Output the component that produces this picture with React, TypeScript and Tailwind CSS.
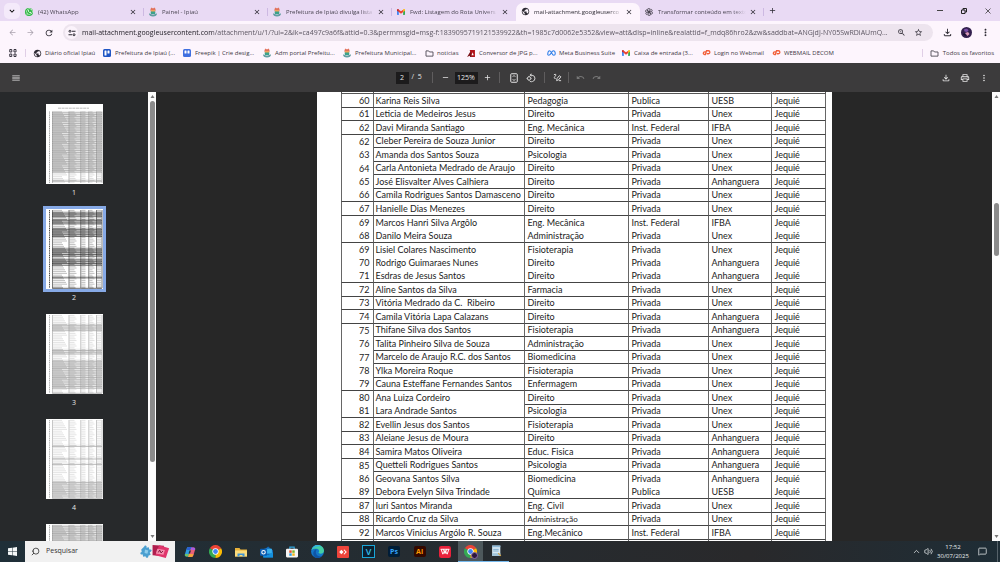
import type { ReactNode } from "react";
import { FaWhatsapp } from "react-icons/fa";
import {
  MdAdd,
  MdArrowBack,
  MdArrowForward,
  MdClose,
  MdKeyboardArrowDown,
  MdMenu,
  MdMoreVert,
  MdOutlineFileDownload,
  MdOutlinePrint,
  MdPublic,
  MdRedo,
  MdRefresh,
  MdRemove,
  MdRotate90DegreesCcw,
  MdStarBorder,
  MdUndo,
  MdZoomIn,
} from "react-icons/md";
import { ChevronUp, MessageSquare, Search, Volume2 } from "lucide-react";

/* ---------- small logos ---------- */

const CityCrest = () => (
  <svg viewBox="0 0 16 20" className="h-[10px] w-[8px]">
    <path d="M3 4l2-3 3 2 3-2 2 3v4H3z" fill="#e2725b" />
    <path d="M4 6h8v5H4z" fill="#f0a35e" />
    <path d="M3 9h10l-1 5H4z" fill="#3aa38a" />
    <path d="M0 13c3-1 4 2 8 2s5-3 8-2c0 4-3 6-8 6s-8-2-8-6z" fill="#5f9ea0" />
  </svg>
);

const Gmail = () => (
  <svg viewBox="0 0 24 18" className="h-[6px] w-[8px]">
    <path d="M0 3v13a2 2 0 0 0 2 2h3.500V8z" fill="#4285f4" />
    <path d="M24 3v13a2 2 0 0 1-2 2h-3.500V8z" fill="#34a853" />
    <path d="M18.500 2v7L24 5V2.500C24 0 21-.8 19.200.7z" fill="#fbbc04" />
    <path d="M5.500 9V2L12 7l6.500-5v7L12 14z" fill="#ea4335" />
    <path d="M0 2.500V5l5.500 4V2L4.800.7C3-.8 0 0 0 2.500z" fill="#c5221f" />
  </svg>
);

const OpenAiMark = () => (
  <svg viewBox="0 0 24 24" className="size-[8px]" fill="none" stroke="#2d2a33" strokeWidth="2">
    {[0, 60, 120, 180, 240, 300].map((a) => (
      <path key={a} transform={`rotate(${a} 12 12)`} d="M12 7l4.500-3a4.300 4.300 0 0 1 5 5.500M12 7v6M12 7V4.500" />
    ))}
  </svg>
);

const Board = ({ second }: { second?: boolean }) => (
  <svg viewBox="0 0 16 16" className="size-[8px]">
    <rect width="16" height="16" rx="3" fill={second ? "#3f6fe0" : "#1f55c4"} />
    <rect x="3" y="3" width="4" height={second ? 6 : 10} rx="1" fill="#fff" />
    <rect x="9" y="3" width="4" height="6" rx="1" fill="#fff" />
  </svg>
);

const Folder = () => (
  <svg viewBox="0 0 20 16" className="h-[7px] w-[9px]" fill="none" stroke="#4a4650" strokeWidth="2">
    <path d="M2 2h6l2 2.500h8V14H2z" strokeLinejoin="round" />
  </svg>
);

const AdobeFlag = () => (
  <svg viewBox="0 0 18 16" className="h-[7px] w-[8px]">
    <path d="M6 0h12v16H10z" fill="#b11218" />
    <path d="M0 16L8 3l3 13H7l-1-3z" fill="#7a1116" />
    <path d="M10 12l3-7 2 7z" fill="#fff" />
  </svg>
);

const Meta = () => (
  <svg viewBox="0 0 24 16" className="h-[6px] w-[9px]" fill="none" stroke="#2b7de9" strokeWidth="2.800">
    <path d="M2 11C2 6 4 2 7 2c5 0 6 12 11 12 3 0 4-2 4-4 0-4-2-8-5-8-5 0-6 12-12 12-2 0-3-1-3-3z" />
  </svg>
);

const Cpanel = () => (
  <svg viewBox="0 0 24 16" className="h-[6px] w-[9px]" fill="none" stroke="#f2603a" strokeWidth="3.500" strokeLinecap="round">
    <path d="M10 5H7a3.500 3.500 0 0 0 0 7h2l3-10h5a4 4 0 0 1 0 8h-3" />
  </svg>
);

const SiteInfo = () => (
  <svg viewBox="0 0 16 16" className="size-[8px]" fill="none" stroke="#2d2a33" strokeWidth="2">
    <circle cx="4" cy="4.500" r="2" />
    <path d="M8 4.500h7M1 11.500h7" />
    <circle cx="12" cy="11.500" r="2" />
  </svg>
);

const FitPage = () => (
  <svg viewBox="0 0 16 20" className="h-[10px] w-[8px]" fill="none" stroke="#e6e6e6" strokeWidth="2">
    <rect x="1.500" y="1.500" width="13" height="17" rx="1.500" />
    <path d="M5.500 7.500L8 5l2.500 2.500M5.500 12.500L8 15l2.500-2.500" />
  </svg>
);

const Annotate = () => (
  <svg viewBox="0 0 20 20" className="size-[9px]" fill="none" stroke="#e6e6e6" strokeWidth="2">
    <path d="M2 4c4-3 6 0 3 3s-3 6 1 5" />
    <path d="M8 17l1-5 5-6 3.500 2.500-5 6.500zM13 17h5" strokeLinejoin="round" />
  </svg>
);

/* ---------- taskbar logos ---------- */

const Windows = () => (
  <svg viewBox="0 0 18 18" className="size-[9px]" fill="#f4f7f8">
    <path d="M0 2.500L8 1.400v7.100H0zM9 1.300L18 0v8.500H9zM0 9.500h8v7.100L0 15.500zM9 9.500h9V18l-9-1.300z" />
  </svg>
);

const Copilot = () => (
  <svg viewBox="0 0 24 24" className="size-[12px]">
    <path d="M9 2h7l-5 15c-1 3-2 4-5 4H5c-3 0-4-2-3-5l3-10c1-3 2-4 4-4z" fill="#2f9de0" />
    <path d="M9 2h7l-2 6H5c1-4 2-6 4-6z" fill="#2b5fd0" />
    <path d="M15 22H8l5-15c1-3 2-4 5-4h1c3 0 4 2 3 5l-3 10c-1 3-2 4-4 4z" fill="#e8607a" />
    <path d="M15 22H8l2-6h9c-1 4-2 6-4 6z" fill="#f5a33c" />
    <path d="M14 4c1-1 2-1 4-1h1c3 0 4 2 3 5h-7z" fill="#a95de0" />
    <path d="M2 16h8l-2 5H5c-3 0-4-2-3-5z" fill="#6cc26a" />
    <path d="M11 9h3l-2 6H9z" fill="#263238" />
  </svg>
);

const Chrome = () => (
  <svg viewBox="0 0 24 24" className="size-[13px]">
    <path d="M12 12L1.600 6A12 12 0 0 1 22.400 6z" fill="#ea4335" />
    <path d="M12 12V24A12 12 0 0 1 1.600 6z" fill="#34a853" />
    <path d="M12 12l10.400-6A12 12 0 0 1 12 24z" fill="#fbbc04" />
    <circle cx="12" cy="12" r="5.800" fill="#fff" />
    <circle cx="12" cy="12" r="4.400" fill="#4285f4" />
  </svg>
);

const Explorer = () => (
  <svg viewBox="0 0 24 20" className="h-[10px] w-[12px]">
    <path d="M0 2h9l2 3h13v14H0z" fill="#e8b23a" />
    <path d="M0 7h24v12H0z" fill="#fbdc7c" />
    <path d="M5 19v-6h14v6h-4v-3H9v3z" fill="#3f94d6" />
  </svg>
);

const Outlook = () => (
  <svg viewBox="0 0 24 22" className="h-[12px] w-[13px]">
    <path d="M6 8l9-7 9 7v13H6z" fill="#1268b8" />
    <path d="M8 5h14v9H8z" fill="#39b0ee" />
    <path d="M6 12l9 5 9-6v10H6z" fill="#1490df" />
    <rect y="5" width="13" height="13" rx="1.500" fill="#0a5bb0" />
    <circle cx="6.500" cy="11.500" r="3.200" fill="none" stroke="#fff" strokeWidth="2" />
  </svg>
);

const Store = () => (
  <svg viewBox="0 0 22 22" className="size-[12px]">
    <path d="M7 6V2h8v4" fill="none" stroke="#35a8e0" strokeWidth="2" />
    <rect y="5" width="22" height="16" rx="2" fill="#f5f5f5" />
    <path d="M6 8h4.500v4.500H6z" fill="#e5532d" />
    <path d="M11.500 8H16v4.500h-4.500z" fill="#7cb62c" />
    <path d="M6 13.500h4.500V18H6z" fill="#2f9fe0" />
    <path d="M11.500 13.500H16V18h-4.500z" fill="#f7b51b" />
  </svg>
);

const Edge = () => (
  <svg viewBox="0 0 24 24" className="size-[13px]">
    <circle cx="12" cy="12" r="12" fill="#1476c8" />
    <path d="M1 9C3 3 7 0 12 0c7 0 12 5 12 10 0 4-3 6-6 6-3 0-4-1-4-2 0-1 1-1 1-3 0-3-3-4-6-4-4 0-6 1-8 2z" fill="#45cfa5" />
    <path d="M1 9c2-6 6-9 11-9 3 0 6 1 8 3-7-2-16 1-19 6z" fill="#36b4e6" />
    <path d="M9 12c-1 5 3 9 8 9 2 0 3 0 4-1-4 5-11 5-15 1-4-5-1-11 3-13 2 1 1 2 0 4z" fill="#0f55a5" />
  </svg>
);

const AnyDesk = () => (
  <svg viewBox="0 0 22 22" className="size-[12px]">
    <rect width="22" height="22" rx="2" fill="#ef443b" />
    <path d="M4 11l4-4 4 4-4 4z" fill="#fff" />
    <path d="M12 7.500l1.500-1L18 11l-4.500 4.500-1.500-1 3.500-3.500z" fill="#fff" />
  </svg>
);

const Wps = () => (
  <svg viewBox="0 0 22 22" className="size-[12px]">
    <rect width="22" height="22" rx="4" fill="#e8213b" />
    <path d="M3 6h16M4 6l3 9 4-7 4 7 3-9M8 6l3 8 3-8" fill="none" stroke="#fff" strokeWidth="1.800" />
  </svg>
);

const Notepad = () => (
  <svg viewBox="0 0 20 22" className="h-[12px] w-[11px]">
    <path d="M2 1h15v19H2z" fill="#d7e8f3" />
    <path d="M2 1h15v3H2z" fill="#8db9d8" />
    <path d="M4 8h10M4 11h10" stroke="#6b9fc4" strokeWidth="1.500" />
    <path d="M2 15h15v5H2z" fill="#9fc3da" />
    <path d="M13 15l5 5" stroke="#d9a441" strokeWidth="2" />
  </svg>
);

const SearchArt = () => (
  <svg viewBox="0 0 70 36" className="h-[17px] w-[34px]">
    <path
      d="M14 8c2-5 7-2 5 2l5-1 1 5c5-2 7 3 2 5l-1 1 2 5-5 2c1 5-5 6-6 1l-5 1-1-5c-5 2-7-4-2-5l-1-5z"
      fill="#4a9fd0"
    />
    <path d="M16 14l7 2-2 7-6-2z" fill="#8fcdec" />
    <path d="M32 4l24 2-1 22-23-2z" fill="#b01f4e" />
    <path d="M46 5l21 6-7 21-22-6z" fill="#e0356b" />
    <path d="M42 12l16 3-3 10-16-3z" fill="#f58fae" />
    <path d="M44 20l3-5 3 6 4-4" fill="none" stroke="#7c1238" strokeWidth="2" />
  </svg>
);

/* ---------- data ---------- */

type Tab = { label: string; icon: ReactNode; active?: boolean };

const tabs: Tab[] = [
  {
    label: "(42) WhatsApp",
    icon: (
      <span className="flex size-[8px] items-center justify-center rounded-full bg-[#2cb742]">
        <FaWhatsapp className="size-[7px] text-white" />
      </span>
    ),
  },
  { label: "Painel - Ipiaú", icon: <CityCrest /> },
  { label: "Prefeitura de Ipiaú divulga lista", icon: <CityCrest /> },
  { label: "Fwd: Listagem do Rota Univers", icon: <Gmail /> },
  { label: "mail-attachment.googleuserco", icon: <MdPublic className="size-[9px] text-[#2d2a33]" />, active: true },
  { label: "Transformar conteúdo em texto", icon: <OpenAiMark /> },
];

const bookmarks: { label: string; icon: ReactNode; width: string }[] = [
  { label: "Diário oficial Ipiaú", icon: <MdPublic className="size-[9px] text-[#2d2a33]" />, width: "w-[70px]" },
  { label: "Prefeitura de Ipiaú (...", icon: <Board />, width: "w-[80px]" },
  { label: "Freepik | Crie desig...", icon: <Board second />, width: "w-[80px]" },
  { label: "Adm portal Prefeitu...", icon: <CityCrest />, width: "w-[80px]" },
  { label: "Prefeitura Municipal...", icon: <CityCrest />, width: "w-[82px]" },
  { label: "noticias", icon: <Folder />, width: "w-[42px]" },
  { label: "Conversor de JPG p...", icon: <AdobeFlag />, width: "w-[80px]" },
  { label: "Meta Business Suite", icon: <Meta />, width: "w-[75px]" },
  { label: "Caixa de entrada (3...", icon: <Gmail />, width: "w-[80px]" },
  { label: "Login no Webmail", icon: <Cpanel />, width: "w-[70px]" },
  { label: "WEBMAIL DECOM", icon: <Cpanel />, width: "w-[70px]" },
];

/* last number: first column from which the line under the row is drawn (6 = no line) */
type Row = [string, string, string, string, string, number];

const rows: Row[] = [
  ["60", "Karina Reis Silva", "Pedagogia", "Publica", "UESB", 0],
  ["61", "Leticia de Medeiros Jesus", "Direito", "Privada", "Unex", 0],
  ["62", "Davi Miranda Santiago", "Eng. Mecânica", "Inst. Federal", "IFBA", 0],
  ["62", "Cleber Pereira de Souza Junior", "Direito", "Privada", "Unex", 1],
  ["63", "Amanda dos Santos Souza", "Psicologia", "Privada", "Unex", 1],
  ["64", "Carla Antonieta Medrado de Araujo", "Direito", "Privada", "Unex", 1],
  ["65", "José Elisvalter Alves Calhiera", "Direito", "Privada", "Anhanguera", 1],
  ["66", "Camila Rodrigues Santos Damasceno", "Direito", "Privada", "Unex", 0],
  ["67", "Hanielle Dias Menezes", "Direito", "Privada", "Unex", 0],
  ["69", "Marcos Hanri Silva Argôlo", "Eng. Mecânica", "Inst. Federal", "IFBA", 6],
  ["68", "Danilo Meira Souza", "Administração", "Privada", "Unex", 0],
  ["69", "Lisiel Colares Nascimento", "Fisioterapia", "Privada", "Unex", 6],
  ["70", "Rodrigo Guimaraes Nunes", "Direito", "Privada", "Anhanguera", 6],
  ["71", "Esdras de Jesus Santos", "Direito", "Privada", "Anhanguera", 0],
  ["72", "Aline Santos da Silva", "Farmacia", "Privada", "Unex", 0],
  ["73", "Vitória Medrado da C.  Ribeiro", "Direito", "Privada", "Unex", 0],
  ["74", "Camila Vitória Lapa Calazans", "Direito", "Privada", "Anhanguera", 0],
  ["75", "Thifane Silva dos Santos", "Fisioterapia", "Privada", "Anhanguera", 1],
  ["76", "Talita Pinheiro Silva de Souza", "Administração", "Privada", "Unex", 1],
  ["77", "Marcelo de Araujo R.C. dos Santos", "Biomedicina", "Privada", "Unex", 1],
  ["78", "Ylka Moreira Roque", "Fisioterapia", "Privada", "Unex", 1],
  ["79", "Cauna Esteffane Fernandes Santos", "Enfermagem", "Privada", "Unex", 0],
  ["80", "Ana Luiza Cordeiro", "Direito", "Privada", "Unex", 2],
  ["81", "Lara Andrade Santos", "Psicologia", "Privada", "Unex", 0],
  ["82", "Evellin Jesus dos Santos", "Fisioterapia", "Privada", "Unex", 0],
  ["83", "Aleiane Jesus de Moura", "Direito", "Privada", "Anhanguera", 0],
  ["84", "Samira Matos Oliveira", "Educ. Fisica", "Privada", "Anhanguera", 0],
  ["85", "Quetteli Rodrigues Santos", "Psicologia", "Privada", "Anhanguera", 1],
  ["86", "Geovana Santos Silva", "Biomedicina", "Privada", "Anhanguera", 6],
  ["89", "Debora Evelyn Silva Trindade", "Química", "Publica", "UESB", 0],
  ["87", "Iuri Santos Miranda", "Eng. Civil", "Privada", "Unex", 0],
  ["88", "Ricardo Cruz da Silva", "Administração", "Privada", "Unex", 0],
  ["92", "Marcos Vinicius Argólo R. Souza", "Eng.Mecânico", "Inst. Federal", "IFBA", 0],
];

/* ruled: row ranges of the miniature whose lines show */
const thumbs: { label: string; ruled: [number, number][]; ink: string; title?: boolean; selected?: boolean }[] = [
  { label: "1", ruled: [[0, 34], [38, 39]], ink: "#8c8c8c", title: true },
  { label: "2", ruled: [[1, 4], [5, 8], [10, 15], [21, 26], [27, 31], [37, 38], [43, 44]], ink: "#222", selected: true },
  { label: "3", ruled: [[5, 9], [19, 22], [25, 41], [43, 44]], ink: "#999" },
  { label: "4", ruled: [[14, 15], [21, 22], [24, 25], [34, 44]], ink: "#a0a0a0" },
  { label: "", ruled: [[0, 44]], ink: "#909090" },
];

/* ---------- parts ---------- */

function Thumb({ ruled, ink, title }: { ruled: [number, number][]; ink: string; title?: boolean }) {
  const top = title ? 7.5 : 1;
  const count = title ? 40 : 44;
  const isRuled = (i: number) => ruled.some(([a, b]) => i >= a && i < b);
  return (
    <svg viewBox="0 0 57 80" className="block h-[80px] w-[57px] bg-white">
      {title && <path d="M12 4.200h31" stroke="#aaa" strokeWidth="0.800" strokeDasharray="3 .6" />}
      {Array.from({ length: count }, (_, i) => {
        const y = top + i * 1.8;
        const name = 9 + ((i * 7) % 6);
        return (
          <g key={i}>
            {isRuled(i) && <rect x="6" y={y - 0.6} width="50" height="1.800" fill={ink} opacity="0.150" />}
            <path
              d={`M7 ${y + 0.4}h${name}M23.500 ${y + 0.4}h${5 + (i % 3)}M35.500 ${y + 0.4}h4M43.500 ${y + 0.4}h${3 + (i % 3)}M51 ${y + 0.4}h4`}
              stroke={ink}
              strokeWidth="0.700"
              opacity={isRuled(i) ? 0.6 : 0.4}
            />
            {isRuled(i) && <path d={`M6 ${y + 1.3}h50`} stroke={ink} strokeWidth="0.600" />}
          </g>
        );
      })}
      <path d={`M3.500 ${top}V79`} stroke={ink} strokeWidth="0.800" strokeDasharray="1.200 .6" />
      <path d={`M6.500 ${top}V79M23 ${top}V79M34.800 ${top}V79M42.800 ${top}V79M50.500 ${top}V79M56 ${top}V79`} stroke={ink} strokeWidth="0.600" />
    </svg>
  );
}

function TabStrip() {
  return (
    <div className="flex h-[21px] shrink-0 bg-[#e9daf4]">
      <div className="flex w-5 shrink-0 items-center justify-center">
        <button aria-label="Pesquisar guias" className="ml-1 flex size-4 items-center justify-center rounded-[5px] bg-[#f4eafa]">
          <MdKeyboardArrowDown className="size-[10px]" />
        </button>
      </div>
      <div className="flex min-w-0 items-end">
        {tabs.map((t, i) => (
          <div
            key={t.label}
            className={
              t.active
                ? "flex h-[18px] w-[124px] min-w-0 items-center rounded-t-[7px] bg-[#fdf5fd] pb-px pl-1"
                : "flex h-[18px] w-[124px] min-w-0 items-center pb-px pl-1"
            }
          >
            <span className="flex w-[10px] shrink-0 justify-center">{t.icon}</span>
            <a
              href="#"
              className={
                t.active
                  ? "ml-1 w-[88px] shrink-0 mask-r-from-85% leading-3 whitespace-nowrap text-[#2d2a33]"
                  : "ml-1 w-[88px] shrink-0 mask-r-from-85% leading-3 whitespace-nowrap text-[#4a4552]"
              }
            >
              {t.label}
            </a>
            <button aria-label="Fechar guia" className="ml-[3px] shrink-0">
              <MdClose className="size-[8px] text-[#2d2a33]" />
            </button>
            {!t.active && i !== 3 && <span className="ml-auto h-2 w-px bg-[#cdb9e2]" />}
          </div>
        ))}
      </div>
      <button aria-label="Nova guia" className="ml-1">
        <MdAdd className="size-[9px] text-[#2d2a33]" />
      </button>
      <div className="ml-auto flex shrink-0">
        <button aria-label="Minimizar" className="flex w-6 items-center justify-center">
          <span className="h-px w-[6px] bg-[#444]" />
        </button>
        <button aria-label="Restaurar" className="flex w-6 items-center justify-center">
          <svg viewBox="0 0 12 12" className="size-[6px]" fill="none" stroke="#222" strokeWidth="2">
            <path d="M1 4h7v7H1zM4 4V1h7v7H8" />
          </svg>
        </button>
        <button aria-label="Fechar" className="flex w-6 items-center justify-center">
          <svg viewBox="0 0 12 12" className="size-[6px]" stroke="#333" strokeWidth="1.500">
            <path d="M1 1l10 10M11 1L1 11" />
          </svg>
        </button>
      </div>
    </div>
  );
}

function AddressBar() {
  return (
    <div className="flex h-[23px] shrink-0 items-center bg-[#fdf5fd] pl-1 text-[#2d2a33]">
      <button aria-label="Voltar" className="flex w-4 justify-center text-[#aaa2ae]">
        <MdArrowBack className="size-[9px]" />
      </button>
      <button aria-label="Avançar" className="flex w-5 justify-center text-[#aaa2ae]">
        <MdArrowForward className="size-[9px]" />
      </button>
      <button aria-label="Recarregar" className="flex w-[18px] justify-center">
        <MdRefresh className="size-[10px]" />
      </button>
      <div className="ml-[5px] flex h-[17px] min-w-0 flex-1 items-center rounded-full bg-[#ede4ee] pr-[6px] pl-[2px]">
        <button aria-label="Informações do site" className="flex size-[13px] shrink-0 items-center justify-center rounded-full bg-[#fbf3fb]">
          <SiteInfo />
        </button>
        <input
          aria-label="Endereço"
          className="ml-1 h-4 min-w-0 flex-1 truncate bg-[linear-gradient(90deg,#1f1b24_131px,#56505c_131px)] bg-clip-text text-[7px] text-transparent outline-none"
          defaultValue="mail-attachment.googleusercontent.com/attachment/u/1/?ui=2&ik=ca497c9a6f&attid=0.3&permmsgid=msg-f:1839095719121539922&th=1985c7d0062e5352&view=att&disp=inline&realattid=f_mdq86hro2&zw&saddbat=ANGjdJ-NY05SwRDiAUmQ..."
        />
        <button aria-label="Zoom" className="flex w-[17px] justify-center">
          <MdZoomIn className="size-[9px]" />
        </button>
        <button aria-label="Favoritar" className="flex w-[17px] justify-center">
          <MdStarBorder className="size-[9px]" />
        </button>
      </div>
      <button aria-label="Downloads" className="ml-[5px] flex w-[18px] justify-center">
        <MdOutlineFileDownload className="size-[11px]" />
      </button>
      <button aria-label="Perfil" className="flex w-5 justify-center">
        <svg viewBox="0 0 22 22" className="size-[11px]">
          <circle cx="11" cy="11" r="11" fill="#33204e" />
          <path d="M6 5c3-3 8-2 9 2l-3 3-5-1z" fill="#7a4fa8" />
          <path d="M8 12l6-2 3 4-4 4z" fill="#d99ab8" />
          <path d="M3 14l5-1 2 6z" fill="#14102a" />
        </svg>
      </button>
      <button aria-label="Menu" className="flex w-[18px] justify-center">
        <MdMoreVert className="size-[11px]" />
      </button>
      <span className="w-[6px]" />
    </div>
  );
}

function BookmarkBar() {
  return (
    <nav className="flex h-[19px] shrink-0 items-center bg-[#fdf5fd] pb-px leading-3 text-[#3d3943]">
      <button aria-label="Apps" className="flex w-[25px] shrink-0 justify-center">
        <svg viewBox="0 0 16 16" className="size-[8px]" fill="none" stroke="#3a3642" strokeWidth="2">
          <path d="M1.500 1h4v5h-4zM10 1h4v5h-4zM1.500 10h4v5h-4zM10 10h4v5h-4z" />
        </svg>
      </button>
      <span className="mr-[6px] h-2 w-px bg-[#e0cfe6]" />
      {bookmarks.map((b) => (
        <a key={b.label} href="#" className={`${b.width} flex shrink-0 items-center gap-[3px] whitespace-nowrap`}>
          <span className="flex w-[10px] shrink-0 justify-center">{b.icon}</span>
          {b.label}
        </a>
      ))}
      <span className="ml-auto h-2 w-px shrink-0 bg-[#e0cfe6]" />
      <a href="#" className="ml-[7px] flex shrink-0 items-center gap-1 pr-[6px] whitespace-nowrap">
        <Folder />
        Todos os favoritos
      </a>
    </nav>
  );
}

const Divider = ({ className }: { className: string }) => (
  <span className={`${className} flex justify-center`}>
    <span className="h-[11px] w-px bg-[#5f5d5e]" />
  </span>
);

function PdfToolbar() {
  return (
    <div className="grid h-[29px] shrink-0 grid-cols-[1fr_auto_1fr] items-center bg-[#3c3b3c] text-[7px] text-[#e6e6e6]">
      <button aria-label="Menu" className="ml-[11px] justify-self-start">
        <MdMenu className="size-[10px]" />
      </button>
      <div className="flex items-center">
        <input aria-label="Página" defaultValue="2" className="h-[12px] w-[13px] bg-[#1c1b1c] text-center outline-none" />
        <span className="w-[17px] pl-[3px] whitespace-pre">/&nbsp; 5</span>
        <Divider className="w-[14px]" />
        <button aria-label="Diminuir zoom" className="flex w-[11px] justify-center">
          <MdRemove className="size-[9px]" />
        </button>
        <input aria-label="Nível de zoom" defaultValue="125%" className="mx-1 h-[12px] w-[23px] bg-[#1c1b1c] text-center outline-none" />
        <button aria-label="Aumentar zoom" className="flex w-[12px] justify-center">
          <MdAdd className="size-[9px]" />
        </button>
        <Divider className="w-[12px]" />
        <button aria-label="Ajustar à página" className="flex w-4 justify-center">
          <FitPage />
        </button>
        <button aria-label="Girar" className="flex w-[18px] justify-center">
          <MdRotate90DegreesCcw className="size-[10px]" />
        </button>
        <Divider className="w-[10px]" />
        <button aria-label="Anotar" className="flex w-[15px] justify-center">
          <Annotate />
        </button>
        <Divider className="w-[8px]" />
        <button aria-label="Desfazer" className="flex w-4 justify-center text-[#777]">
          <MdUndo className="size-[9px]" />
        </button>
        <button aria-label="Refazer" className="flex w-4 justify-center text-[#777]">
          <MdRedo className="size-[9px]" />
        </button>
      </div>
      <div className="mr-[7px] flex justify-self-end">
        <button aria-label="Baixar" className="flex w-[19px] justify-center">
          <MdOutlineFileDownload className="size-[10px]" />
        </button>
        <button aria-label="Imprimir" className="flex w-[19px] justify-center">
          <MdOutlinePrint className="size-[10px]" />
        </button>
        <button aria-label="Mais" className="flex w-[19px] justify-center">
          <MdMoreVert className="size-[10px]" />
        </button>
      </div>
    </div>
  );
}

function Scrollbar({ before, thumb }: { before: string; thumb: string }) {
  return (
    <div className="flex w-2 shrink-0 flex-col items-center bg-[#fcfcfc] py-[3px]">
      <svg viewBox="0 0 8 6" className="h-[3px] w-[5px] shrink-0" fill="#777">
        <path d="M4 0l4 6H0z" />
      </svg>
      <span className={before} />
      <span className={`${thumb} w-[5px] shrink-0 rounded-full bg-[#8b8b8b]`} />
      <svg viewBox="0 0 8 6" className="mt-auto h-[3px] w-[5px] shrink-0" fill="#777">
        <path d="M4 6l4-6H0z" />
      </svg>
    </div>
  );
}

function Sidebar() {
  return (
    <aside className="flex w-[148px] shrink-0 flex-col items-center overflow-hidden bg-[#27292b] pt-[9px] text-[7px]">
      {thumbs.map((t) => (
        <a key={t.label} href="#" className="flex h-[105px] shrink-0 flex-col items-center">
          <span className={t.selected ? "border-3 border-[#86a9e6]" : "border-3 border-transparent"}>
            <Thumb ruled={t.ruled} ink={t.ink} title={t.title} />
          </span>
          <span className="leading-3 text-[#e6e6e6]">{t.label}</span>
        </a>
      ))}
    </aside>
  );
}

const columns = ["w-[33px]", "w-[151px]", "w-[104px]", "w-[80px]", "w-[63px]", "w-[54px]"];

function Document() {
  return (
    <main className="min-w-0 flex-1 overflow-hidden bg-[#272727]">
      <div className="mx-auto min-h-full w-[515px] bg-white pl-[24px]">
        <table className="table-fixed border-separate border-spacing-0 font-[family-name:Lato,Carlito,sans-serif] text-[9px] leading-3 text-[#1c1c1c]">
          <colgroup>
            {columns.map((c) => (
              <col key={c} className={c} />
            ))}
          </colgroup>
          <tbody>
            <tr>
              {columns.map((c, i) => (
                <td key={c} className={i === 0 ? "h-[2px] border-x border-b border-[#555] p-0" : "h-[2px] border-r border-b border-[#555] p-0"} />
              ))}
            </tr>
            {rows.map(([no, name, course, kind, school, rule], r) => (
              <tr key={r} className="h-[13px] even:h-[14px]">
                {[no, name, course, kind, school, "Jequié"].map((cell, c) => (
                  <td
                    key={c}
                    className={[
                      "border-r border-r-[#666] p-0 whitespace-pre",
                      c === 0 ? "border-l border-l-[#666] pr-[3px] text-right" : c === 1 ? "pl-[2px]" : "pl-[3px]",
                      c >= rule ? "border-b border-b-[#444]" : "",
                      no === "88" && c === 2 ? "text-[8px]" : "",
                    ].join(" ")}
                  >
                    {cell}
                  </td>
                ))}
              </tr>
            ))}
            <tr>
              {columns.map((c, i) => (
                <td key={c} className={i === 0 ? "h-[14px] border-x border-[#666] p-0" : "h-[14px] border-r border-[#666] p-0"} />
              ))}
            </tr>
          </tbody>
        </table>
      </div>
    </main>
  );
}

const apps: { name: string; icon: ReactNode; state?: "active" | "open" }[] = [
  { name: "Copilot", icon: <Copilot /> },
  { name: "Google Chrome", icon: <Chrome /> },
  { name: "Explorador de Arquivos", icon: <Explorer /> },
  { name: "Outlook", icon: <Outlook /> },
  { name: "Microsoft Store", icon: <Store /> },
  { name: "Microsoft Edge", icon: <Edge /> },
  { name: "AnyDesk", icon: <AnyDesk /> },
  {
    name: "Vegas",
    icon: (
      <span className="flex size-[13px] items-center justify-center border border-[#1aa7d8] bg-[#0c2030] text-[9px] leading-none font-semibold text-[#35c3f0]">V</span>
    ),
  },
  {
    name: "Photoshop",
    icon: <span className="flex h-[11px] w-[12px] items-center justify-center rounded-[2px] bg-[#001d36] text-[7px] leading-none font-bold text-[#35a6ff]">Ps</span>,
  },
  {
    name: "Illustrator",
    icon: <span className="flex h-[11px] w-[12px] items-center justify-center rounded-[2px] bg-[#330800] text-[7px] leading-none font-bold text-[#ff9a00]">Ai</span>,
  },
  { name: "WPS Office", icon: <Wps /> },
  {
    name: "Google Chrome - perfil",
    state: "active",
    icon: (
      <span className="relative">
        <Chrome />
        <span className="absolute -right-px -bottom-px size-[7px] rounded-full border border-[#8a6aa8] bg-[#2c1840]" />
      </span>
    ),
  },
  { name: "Bloco de Notas", icon: <Notepad />, state: "open" },
];

function Taskbar() {
  return (
    <footer className="flex h-[21px] shrink-0 items-stretch bg-linear-to-r from-[#1f2f38] via-[#29292b] via-75% to-[#1e2d36]">
      <button aria-label="Iniciar" className="flex w-[25px] shrink-0 items-center justify-center">
        <Windows />
      </button>
      <label className="flex w-[150px] shrink-0 items-center bg-[#f1f1f1] pr-1 pl-[6px]">
        <Search className="size-[9px] -scale-x-100 text-[#222]" />
        <input aria-label="Pesquisar" placeholder="Pesquisar" className="ml-[6px] min-w-0 flex-1 text-[7px] outline-none placeholder:text-[#333]" />
        <SearchArt />
      </label>
      <div className="ml-[2px] flex w-[332px]">
        {apps.map((a) => (
          <button
            key={a.name}
            aria-label={a.name}
            className={
              a.state === "active"
                ? "flex flex-1 items-center justify-center border-b border-[#76b9ed] bg-[#4d585c]"
                : a.state === "open"
                  ? "flex flex-1 items-center justify-center border-b border-[#76b9ed]"
                  : "flex flex-1 items-center justify-center"
            }
          >
            {a.icon}
          </button>
        ))}
      </div>
      <div className="ml-auto flex items-center text-[#e8ecee]">
        <ChevronUp className="size-[9px]" />
        <Volume2 className="ml-[3px] size-[9px]" />
        <div className="ml-1 w-[32px] text-center leading-[9px] whitespace-nowrap">
          <div>17:52</div>
          <div>30/07/2025</div>
        </div>
        <button aria-label="Notificações" className="ml-[5px] flex w-[17px] justify-center">
          <MessageSquare className="size-[9px]" />
        </button>
        <span className="ml-[6px] h-full w-px bg-[#56626a]" />
        <span className="w-[2px]" />
      </div>
    </footer>
  );
}

export default function App() {
  return (
    <div className="flex h-screen flex-col overflow-hidden bg-[#272727] font-[family-name:Open_Sans,Noto_Sans,sans-serif] text-[6px]">
      <TabStrip />
      <AddressBar />
      <BookmarkBar />
      <PdfToolbar />
      <div className="flex min-h-0 flex-1">
        <Sidebar />
        <Scrollbar before="h-[3px] shrink-0" thumb="h-[361px]" />
        <Document />
        <Scrollbar before="h-[105px] shrink-0" thumb="h-[53px]" />
      </div>
      <Taskbar />
    </div>
  );
}
